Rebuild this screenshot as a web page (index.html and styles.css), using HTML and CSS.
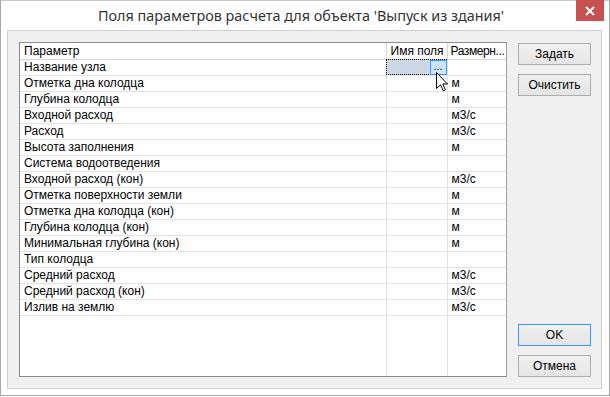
FILE: index.html
```html
<!DOCTYPE html>
<html lang="ru">
<head>
<meta charset="utf-8">
<link rel="stylesheet" href="styles.css">
</head>
<body>
<div class="window">
  <div class="titlebar">
    <span class="title">Поля параметров расчета для объекта 'Выпуск из здания'</span>
    <div class="close"><svg width="10" height="10" viewBox="0 0 10 10"><path d="M1 1 L9 9 M9 1 L1 9" stroke="#fff" stroke-width="2"/></svg></div>
  </div>
  <div class="client">
    <div class="grid">
      <table class="list">
        <thead>
          <tr><th class="c1">Параметр</th><th class="c2">Имя поля</th><th class="c3">Размерн...</th></tr>
        </thead>
        <tbody>
          <tr><td>Название узла</td><td class="sel"><span class="dots">...</span></td><td></td></tr>
          <tr><td>Отметка дна колодца</td><td></td><td>м</td></tr>
          <tr><td>Глубина колодца</td><td></td><td>м</td></tr>
          <tr><td>Входной расход</td><td></td><td>м3/с</td></tr>
          <tr><td>Расход</td><td></td><td>м3/с</td></tr>
          <tr><td>Высота заполнения</td><td></td><td>м</td></tr>
          <tr><td>Система водоотведения</td><td></td><td></td></tr>
          <tr><td>Входной расход (кон)</td><td></td><td>м3/с</td></tr>
          <tr><td>Отметка поверхности земли</td><td></td><td>м</td></tr>
          <tr><td>Отметка дна колодца (кон)</td><td></td><td>м</td></tr>
          <tr><td>Глубина колодца (кон)</td><td></td><td>м</td></tr>
          <tr><td>Минимальная глубина (кон)</td><td></td><td>м</td></tr>
          <tr><td>Тип колодца</td><td></td><td></td></tr>
          <tr><td>Средний расход</td><td></td><td>м3/с</td></tr>
          <tr><td>Средний расход (кон)</td><td></td><td>м3/с</td></tr>
          <tr><td>Излив на землю</td><td></td><td>м3/с</td></tr>
          <tr class="filler"><td></td><td></td><td></td></tr>
        </tbody>
      </table>
      <svg class="cursor" width="13" height="20" viewBox="0 0 13 20"><path d="M0.5 0.5 L0.5 16.5 L4.5 12.8 L7.2 18.8 L9.4 17.8 L6.8 12 L11.5 12 Z" fill="#fff" stroke="#000" stroke-width="1" stroke-linejoin="miter"/></svg>
    </div>
    <div class="buttons">
      <div class="top">
        <button class="btn">Задать</button>
        <button class="btn">Очистить</button>
      </div>
      <div class="bottom">
        <button class="btn default">OK</button>
        <button class="btn">Отмена</button>
      </div>
    </div>
  </div>
</div>
</body>
</html>
```
FILE: styles.css
```css
* { box-sizing: border-box; }
html, body { margin: 0; padding: 0; background: #fff; }
body { width: 610px; height: 397px; overflow: hidden; }

.window {
  width: 610px;
  height: 396px;
  border: 1px solid #a8a8a8;
  border-top-color: #c8c8c8;
  background: #fff;
  position: relative;
  padding: 0 7px 6px 6px;
  display: flex;
  flex-direction: column;
}

.titlebar {
  height: 29px;
  display: flex;
  align-items: center;
  justify-content: center;
  font-family: "Noto Sans", "Open Sans", sans-serif;
  font-size: 14.4px;
  color: #333;
}
.title { padding-right: 7px; padding-bottom: 1px; }

.close {
  position: absolute;
  top: -1px;
  right: 5px;
  width: 28px;
  height: 21px;
  background: #c75050;
  display: flex;
  align-items: center;
  justify-content: center;
}

.client {
  flex: 1;
  background: #f0f0f0;
  border: 1px solid #cfcfcf;
  padding: 11px 10px 11px 11px;
  display: flex;
  gap: 11px;
  font-family: "Liberation Sans", Arial, sans-serif;
  font-size: 12px;
  color: #000;
}

.grid {
  width: 489px;
  border: 1px solid #8c8c8c;
  border-right-color: #a0a0a0;
  background: #fff;
  position: relative;
  overflow: hidden;
}

.list {
  border-collapse: collapse;
  table-layout: fixed;
  width: 486px;
  height: 100%;
}
.list th, .list td {
  padding: 0 0 0 4px;
  text-align: left;
  font-weight: normal;
  white-space: nowrap;
  overflow: hidden;
  border-right: 1px solid #e3e3e3;
  vertical-align: middle;
}
.list th {
  height: 16px;
  border-bottom: 1px solid #d5d5d5;
  border-right-color: #d5d5d5;
  line-height: 14px;
}
.list th.c3 { padding-left: 3px; letter-spacing: -0.4px; }
.list td {
  height: 16px;
  border-bottom: 1px solid #e3e3e3;
  line-height: 14px;
}
.list .c1 { width: 366px; }
.list .c2 { width: 61px; }
.list .c3 { width: 59px; }
.list tr.filler td { height: auto; border-bottom: none; }

.list td.sel {
  position: relative;
  background: #ccd8e5;
  outline: 1px dotted #000;
  outline-offset: -1px;
}
.dots {
  position: absolute;
  right: 0;
  top: 0;
  width: 17px;
  height: 15px;
  background: #cce4f7;
  border: 1px solid #3399ff;
  line-height: 10px;
  text-align: center;
  font-size: 11px;
}

.cursor {
  position: absolute;
  left: 416px;
  top: 29px;
}

.buttons {
  width: 73px;
  display: flex;
  flex-direction: column;
  justify-content: space-between;
}
.top, .bottom { display: flex; flex-direction: column; gap: 9px; }
.top { padding-top: 1px; }
.btn {
  width: 73px;
  height: 22px;
  border: 1px solid #adadad;
  background: linear-gradient(#f0f0f0, #e5e5e5);
  font-family: "Liberation Sans", Arial, sans-serif;
  font-size: 12px;
  color: #000;
  padding: 0;
  margin: 0;
}
.btn.default { border-color: #3399ff; }
```
